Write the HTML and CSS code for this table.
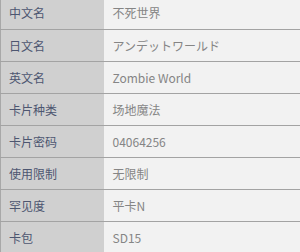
FILE: index.html
```html
<!DOCTYPE html>
<html lang="zh-CN">
<head>
  <meta charset="UTF-8" />
  <meta name="viewport" content="width=device-width, initial-scale=1.0"/>
  <title>卡片信息</title>
  <link rel="stylesheet" href="styles.css">
</head>
<body>

  <table class="card-info">
    <tr><th>中文名</th><td>不死世界</td></tr>
    <tr><th>日文名</th><td>アンデットワールド</td></tr>
    <tr><th>英文名</th><td>Zombie World</td></tr>
    <tr><th>卡片种类</th><td>场地魔法</td></tr>
    <tr><th>卡片密码</th><td>04064256</td></tr>
    <tr><th>使用限制</th><td>无限制</td></tr>
    <tr><th>罕见度</th><td>平卡N</td></tr>
    <tr><th>卡包</th><td>SD15</td></tr>
  </table>

</body>
</html>
```

FILE: styles.css
```css
* {
  box-sizing: border-box;
}

body {
  margin: 0;
  background-color: #f2f2f2;
  font-family: "Noto Sans CJK SC", "Noto Sans", sans-serif;
  font-size: 12px;
}

.card-info {
  width: 100%;
  margin-top: -3px;
  border-collapse: collapse;
  border-left: 1px solid #a8a8a8;
}

.card-info tr {
  height: 32px;
  border-bottom: 1px solid #a3a3a3;
}

.card-info th,
.card-info td {
  padding: 0 0 0 8px;
  text-align: left;
  font-weight: normal;
  vertical-align: middle;
}

.card-info th {
  width: 103px;
  background-color: #d0d0d0;
  color: #4d5670;
}

.card-info td {
  padding-left: 9px;
  background-color: #f2f2f2;
  color: #858585;
}
```
